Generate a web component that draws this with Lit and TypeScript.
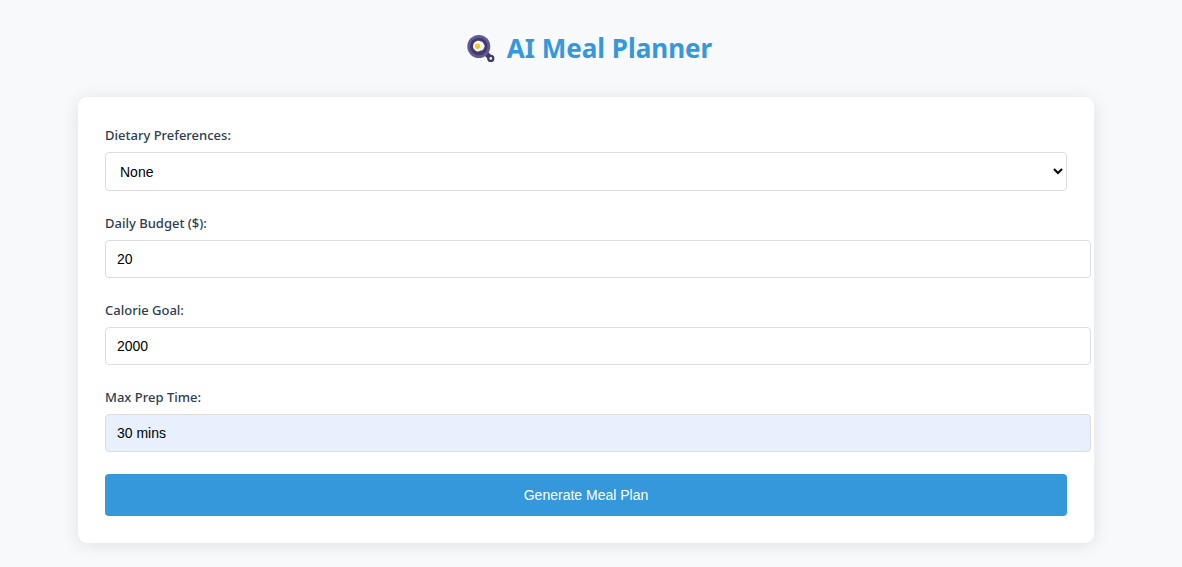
import { LitElement, html, css } from "lit";
import { customElement, state } from "lit/decorators.js";

@customElement("pan-icon")
export class PanIcon extends LitElement {
  static styles = css`
    :host {
      display: block;
      flex: none;
      width: 28px;
      height: 28px;
    }
    .icon {
      display: block;
      width: 100%;
      height: 100%;
    }
  `;

  render() {
    return html`
      <svg class="icon" viewBox="0 0 28 28" aria-hidden="true">
        <path d="M19 18.5 L23 22.5" stroke="#433b6b" stroke-width="5" stroke-linecap="round" />
        <circle cx="23.8" cy="23.4" r="3.6" fill="#433b6b" />
        <circle cx="23.8" cy="23.4" r="1.3" fill="#f8f9fc" />
        <circle cx="11.8" cy="11.5" r="11.5" fill="#635994" />
        <circle cx="11.8" cy="11.5" r="8.8" fill="#433b6b" />
        <path
          d="M10 6 C11.8 5.4 12.8 6.5 14.2 6.5 C16.2 6.7 16 8.3 17 9.5 C18.4 11 17.2 12.2 16.8 13.4 C16.2 15.4 14.5 15 13.2 15.8 C11.4 16.8 9.5 16.6 8.1 15.2 C6.6 14.1 5.8 12.6 6.2 10.8 C6 8.5 7.8 6.7 10 6Z"
          fill="#ffffff"
        />
        <circle cx="10.5" cy="11.3" r="2.7" fill="#fcc235" />
      </svg>
    `;
  }
}

@customElement("app-root")
export class AppRoot extends LitElement {
  static styles = css`
    :host {
      display: block;
      min-height: 100vh;
      box-sizing: border-box;
      padding: 32px 88px 24px 78px;
      background: #f8f9fb;
      color: #2c3e50;
      font-family: "Segoe UI", "Noto Sans", sans-serif;
    }
    .title {
      display: flex;
      align-items: center;
      justify-content: center;
      gap: 12px;
      margin: 0 0 32px;
      padding-left: 7px;
      color: #3498db;
      font-size: 26px;
      line-height: 33px;
      font-weight: 700;
    }
    .card {
      display: flex;
      flex-direction: column;
      gap: 22px;
      max-width: 962px;
      margin: 0 auto;
      padding: 28px 27px 27px;
      border-radius: 9px;
      background: #ffffff;
      box-shadow: 0 2px 18px rgba(0, 0, 0, 0.1);
    }
    .field {
      display: flex;
      flex-direction: column;
      gap: 7px;
    }
    .label {
      font-size: 13px;
      line-height: 20px;
      font-weight: 500;
    }
    .control {
      width: 100%;
      padding: 10px;
      border: 1px solid #dddddd;
      border-radius: 4px;
      background: #ffffff;
      color: #000000;
      font-family: "Liberation Sans", Arial, sans-serif;
      font-size: 14px;
      line-height: 16px;
    }
    .select {
      box-sizing: border-box;
      height: 39px;
    }
    .input {
      box-sizing: content-box;
      height: 16px;
      padding: 10px 11px;
    }
    .filled {
      background: #e8f0fe;
    }
    .submit {
      height: 42px;
      padding: 0 20px;
      border: 0;
      border-radius: 4px;
      background: #3498db;
      color: #ffffff;
      font-family: "Liberation Sans", Arial, sans-serif;
      font-size: 14px;
      line-height: 16px;
      cursor: pointer;
    }
    .submit:hover {
      background: #2980b9;
    }
  `;

  @state() private budget = "20";
  @state() private calories = "2000";
  @state() private prepTime = "30 mins";

  render() {
    return html`
      <h1 class="title"><pan-icon></pan-icon><span>AI Meal Planner</span></h1>
      <form class="card" @submit=${(e: Event) => e.preventDefault()}>
        <div class="field">
          <label class="label" for="diet">Dietary Preferences:</label>
          <select class="control select" id="diet">
            <option>None</option>
          </select>
        </div>
        <div class="field">
          <label class="label" for="budget">Daily Budget ($):</label>
          <input class="control input" id="budget" type="number" .value=${this.budget} />
        </div>
        <div class="field">
          <label class="label" for="calories">Calorie Goal:</label>
          <input class="control input" id="calories" type="number" .value=${this.calories} />
        </div>
        <div class="field">
          <label class="label" for="prep">Max Prep Time:</label>
          <input class="control input filled" id="prep" type="text" .value=${this.prepTime} />
        </div>
        <button class="submit" type="submit">Generate Meal Plan</button>
      </form>
    `;
  }
}
